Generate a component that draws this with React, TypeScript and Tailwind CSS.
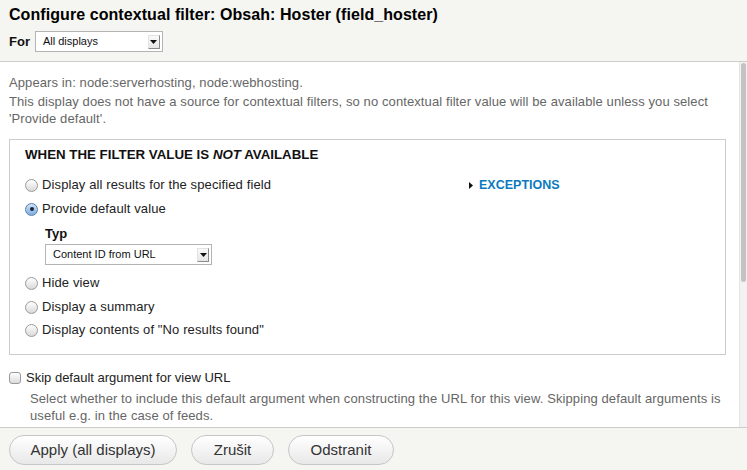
import React from 'react';

const FONT = { fontFamily: '"Liberation Sans", Arial, sans-serif' };

function SelectArrow() {
  return (
    <span className="flex h-[14px] w-[12px] items-center justify-center border border-[#e2e2e2] border-r-[#8a8a8a] border-b-[#8a8a8a] bg-gradient-to-b from-[#fafafa] to-[#e6e6e6]">
      <svg width="7" height="4" viewBox="0 0 7 4">
        <path d="M0 0 L7 0 L3.5 4 Z" fill="#111" />
      </svg>
    </span>
  );
}

function FakeSelect({ label, width }: { label: string; width: string }) {
  return (
    <div className={`flex h-[21px] ${width} items-center justify-between border border-[#b4b4b4] bg-white pl-[7px] pr-[2px] text-[11px] text-[#111]`}>
      <span>{label}</span>
      <SelectArrow />
    </div>
  );
}

function Radio({ label, checked = false, short = false }: { label: string; checked?: boolean; short?: boolean }) {
  return (
    <div className={`flex ${short ? 'h-[22px]' : 'h-[24px]'} items-center`}>
      {checked ? (
        <span className="flex h-[13px] w-[13px] items-center justify-center rounded-full border border-[#5a7fae] bg-gradient-to-b from-[#cfe2f6] to-[#7eaee0]">
          <span className="h-[4px] w-[4px] rounded-full bg-[#1b2535]" />
        </span>
      ) : (
        <span className="h-[13px] w-[13px] rounded-full border border-[#9a9a9a] bg-gradient-to-b from-white to-[#d9d9d9]" />
      )}
      <span className="ml-[4px] text-[13px] tracking-[0.12px] text-[#222]">{label}</span>
    </div>
  );
}

export default function App() {
  return (
    <div className="flex h-[470px] w-[747px] flex-col overflow-hidden bg-white" style={FONT}>
      {/* header */}
      <div className="h-[62px] border-b border-[#cdcdc8] bg-[#f5f5f1] px-[9px] pt-[5px]">
        <h1 className="text-[16px] font-bold leading-[20px] tracking-[0.07px] text-black">
          Configure contextual filter: Obsah: Hoster (field_hoster)
        </h1>
        <div className="mt-[6px] flex h-[21px] items-center">
          <span className="mr-[5px] text-[13px] font-bold text-[#111]">For</span>
          <FakeSelect label="All displays" width="w-[128px]" />
        </div>
      </div>

      {/* body */}
      <div className="flex min-h-0 flex-1">
        <div className="flex-1 pl-[9px] pr-[13px] pt-[12px]">
          <p className="text-[13px] leading-[17px] tracking-[0.1px] text-[#666]">
            Appears in: node:serverhosting, node:webhosting.
          </p>
          <p className="mt-[2px] text-[13px] leading-[17px] tracking-[0.1px] text-[#666]">
            This display does not have a source for contextual filters, so no contextual filter value will be available unless you select 'Provide default'.
          </p>

          <div className="mt-[12px] border border-[#cccccc] pb-[13px] pl-[15px] pt-[7px]">
            <div className="text-[13.3px] font-bold leading-[16px] text-[#111]">
              WHEN THE FILTER VALUE IS <em>NOT</em> AVAILABLE
            </div>
            <div className="mt-[10px] flex">
              <div className="w-[444px]">
                <Radio label="Display all results for the specified field" />
                <Radio label="Provide default value" checked />
                <div className="ml-[20px] mt-[5px]">
                  <div className="text-[13px] font-bold leading-[16px] text-[#111]">Typ</div>
                  <div className="mt-[2px]">
                    <FakeSelect label="Content ID from URL" width="w-[167px]" />
                  </div>
                </div>
                <div className="mt-[6px]">
                  <Radio label="Hide view" />
                  <Radio label="Display a summary" />
                  <Radio label={'Display contents of "No results found"'} short />
                </div>
              </div>
              <div className="flex h-[25px] items-center">
                <svg width="4" height="7" viewBox="0 0 4 7" className="mr-[6px]">
                  <path d="M0 0 L4 3.5 L0 7 Z" fill="#111" />
                </svg>
                <span className="text-[12.5px] font-bold text-[#0b7ac0]">EXCEPTIONS</span>
              </div>
            </div>
          </div>

          <div className="mt-[15px] flex h-[16px] items-center">
            <span className="h-[12px] w-[12px] rounded-[3px] border border-[#9a9a9a] bg-gradient-to-b from-white to-[#dcdcdc]" />
            <span className="ml-[5px] text-[13px] text-[#222]">Skip default argument for view URL</span>
          </div>
          <p className="ml-[21px] mt-[4px] text-[13px] leading-[17px] tracking-[0.1px] text-[#666]">
            Select whether to include this default argument when constructing the URL for this view. Skipping default arguments is useful e.g. in the case of feeds.
          </p>
        </div>

        {/* scrollbar */}
        <div className="w-[8px] border-l border-[#e4e4e4] bg-[#f2f2f2]">
          <div className="ml-[1px] mt-[1px] h-[219px] w-[5px] rounded-full bg-[#c3c3c3]" />
        </div>
      </div>

      {/* footer */}
      <div className="flex h-[43px] gap-[14px] border-t border-[#cdcdc8] bg-[#f5f5f1] px-[9px] pt-[7px]">
        {['Apply (all displays)', 'Zrušit', 'Odstranit'].map((b, i) => (
          <button
            key={b}
            className={`h-[30px] ${i === 0 ? 'w-[168px]' : i === 1 ? 'w-[83px]' : 'w-[106px]'} rounded-full border border-[#c6c6c6] bg-gradient-to-b from-white to-[#e8e8e8] text-[15px] text-[#333]`}
          >
            {b}
          </button>
        ))}
      </div>
    </div>
  );
}
